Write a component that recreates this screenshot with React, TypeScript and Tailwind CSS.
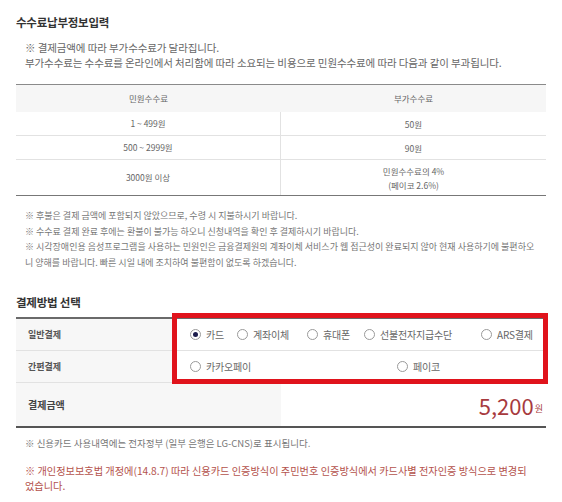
const feeRows = [
  { base: "1 ~ 499원", extra: ["50원"], h: "h-[23px]" },
  { base: "500 ~ 2999원", extra: ["90원"], h: "h-[24px]" },
  { base: "3000원 이상", extra: ["민원수수료의 4%", "(페이코 2.6%)"], h: "h-[36px]" },
];

const generalOptions = [
  { label: "카드", w: "w-[47px]", checked: true },
  { label: "계좌이체", w: "w-[70px]" },
  { label: "휴대폰", w: "w-[57px]" },
  { label: "선불전자지급수단", w: "w-[117px]" },
  { label: "ARS결제", w: "w-[60px]" },
];

function Radio({ checked }: { checked?: boolean }) {
  return (
    <span className="w-[11px] h-[11px] rounded-full border border-[#9a9a9a] bg-white flex items-center justify-center shrink-0">
      {checked && <span className="w-[5px] h-[5px] rounded-full bg-[#1c1c4c]" />}
    </span>
  );
}

function Option({ label, checked, w }: { label: string; checked?: boolean; w: string }) {
  return (
    <label className={`${w} flex items-center gap-[5px] shrink-0`}>
      <Radio checked={checked} />
      <span className="text-[10px] text-[#666] whitespace-nowrap tracking-[-0.02em]">{label}</span>
    </label>
  );
}

export default function App() {
  return (
    <div className="w-[562px] h-[502px] overflow-hidden bg-white px-4 pt-[15px] font-['Noto_Sans_CJK_KR',sans-serif]">
      <h2 className="text-[11.5px] leading-[14px] font-bold text-[#333] tracking-[-0.02em]">
        수수료납부정보입력
      </h2>

      <div className="ml-[9px] mt-[11px] text-[10.5px] leading-[15px] text-[#666] tracking-[-0.01em] whitespace-nowrap">
        <p>※ 결제금액에 따라 부가수수료가 달라집니다.</p>
        <p>부가수수료는 수수료를 온라인에서 처리함에 따라 소요되는 비용으로 민원수수료에 따라 다음과 같이 부과됩니다.</p>
      </div>

      {/* fee table */}
      <div className="mt-[14px] border-t border-t-[#8a8a8a] border-b border-b-[#777] text-[8.5px] text-[#666]">
        <div className="grid grid-cols-2 h-[27px] bg-[#f6f6f6]">
          <div className="flex items-center justify-center">민원수수료</div>
          <div className="flex items-center justify-center">부가수수료</div>
        </div>
        {feeRows.map((r, i) => (
          <div
            key={r.base}
            className={`grid grid-cols-2 ${r.h} ${i > 0 ? "border-t border-[#e2e2e2]" : ""}`}
          >
            <div className="flex items-center justify-center border-r border-[#e2e2e2]">{r.base}</div>
            <div className="flex flex-col items-center justify-center leading-[14px]">
              {r.extra.map((t) => (
                <span key={t}>{t}</span>
              ))}
            </div>
          </div>
        ))}
      </div>

      <div className="ml-[9px] mt-[12px] text-[9px] leading-[15.5px] text-[#777] whitespace-nowrap">
        <p>※ 후불은 결제 금액에 포함되지 않았으므로, 수령 시 지불하시기 바랍니다.</p>
        <p>※ 수수료 결제 완료 후에는 환불이 불가능 하오니 신청내역을 확인 후 결제하시기 바랍니다.</p>
        <p>※ 시각장애인용 음성프로그램을 사용하는 민원인은 금융결제원의 계좌이체 서비스가 웹 접근성이 완료되지 않아 현재 사용하기에 불편하오</p>
        <p>니 양해를 바랍니다. 빠른 시일 내에 조치하여 불편함이 없도록 하겠습니다.</p>
      </div>

      <h2 className="mt-[25px] text-[11.5px] leading-[14px] font-bold text-[#333] tracking-[-0.02em]">
        결제방법 선택
      </h2>

      {/* payment method table */}
      <div className="relative mt-[8px] border-t-2 border-t-[#6a6a6a] border-b-2 border-b-[#555]">
        <div className="flex h-[31px]">
          <div className="w-[156px] bg-[#f7f7f7] flex items-center pl-[12px] text-[9px] font-bold text-[#555]">
            일반결제
          </div>
          <div className="flex-1 flex items-center pl-[18px]">
            {generalOptions.map((o) => (
              <Option key={o.label} {...o} />
            ))}
          </div>
        </div>
        <div className="flex h-[32px] border-t border-[#e2e2e2]">
          <div className="w-[156px] bg-[#f7f7f7] flex items-center pl-[12px] text-[9px] font-bold text-[#555]">
            간편결제
          </div>
          <div className="flex-1 flex items-center pl-[18px]">
            <Option label="카카오페이" w="w-[207px]" />
            <Option label="페이코" w="w-[60px]" />
          </div>
        </div>
        <div className="flex h-[44px] border-t border-[#e2e2e2]">
          <div className="w-[265px] bg-[#f7f7f7] flex items-center pl-[12px] text-[10px] font-bold text-[#444]">
            결제금액
          </div>
          <div className="flex-1 flex items-center justify-end pr-[3px] text-[#a73a3e]">
            <span className="text-[22px] leading-none">5,200</span>
            <span className="text-[9px] leading-none mt-[8px] ml-[1px]">원</span>
          </div>
        </div>

        <div className="absolute left-[156px] top-[-6px] w-[376px] h-[71px] border-[5px] border-[#e0131c] pointer-events-none" />
      </div>

      <div className="ml-[9px] mt-[8px] leading-[15px] whitespace-nowrap">
        <p className="text-[9.5px] text-[#777]">※ 신용카드 사용내역에는 전자정부 (일부 은행은 LG-CNS)로 표시됩니다.</p>
        <div className="mt-[12px] text-[10.2px] leading-[15px] text-[#b4524c]">
          <p>※ 개인정보보호법 개정에(14.8.7) 따라 신용카드 인증방식이 주민번호 인증방식에서 카드사별 전자인증 방식으로 변경되</p>
          <p>었습니다.</p>
        </div>
      </div>
    </div>
  );
}
